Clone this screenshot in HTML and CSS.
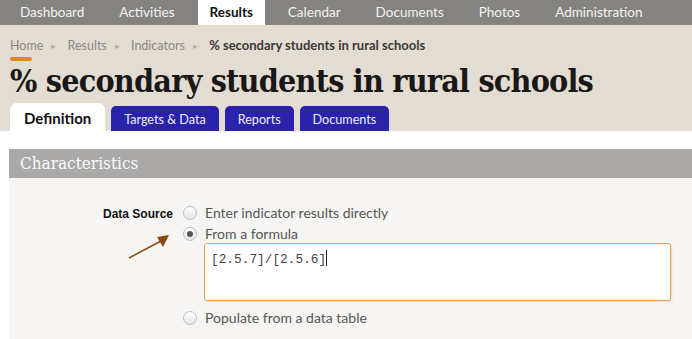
FILE: index.html
```html
<!DOCTYPE html>
<html lang="en">
<head>
    <meta charset="UTF-8">
    <title>% secondary students in rural schools</title>
    <link rel="stylesheet" href="styles.css">
</head>
<body>
    <div class="topnav">
        <a href="#" class="nav-item">Dashboard</a>
        <a href="#" class="nav-item">Activities</a>
        <a href="#" class="nav-item active">Results</a>
        <a href="#" class="nav-item">Calendar</a>
        <a href="#" class="nav-item">Documents</a>
        <a href="#" class="nav-item">Photos</a>
        <a href="#" class="nav-item">Administration</a>
    </div>

    <div class="header">
        <div class="crumbs">
            <a href="#">Home</a><span class="sep">&#9656;</span>
            <a href="#">Results</a><span class="sep">&#9656;</span>
            <a href="#">Indicators</a><span class="sep">&#9656;</span>
            <b>% secondary students in rural schools</b>
        </div>
        <div class="accent"></div>
        <h1>% secondary students in rural schools</h1>
        <div class="tabs">
            <a href="#" class="tab current">Definition</a>
            <a href="#" class="tab">Targets &amp; Data</a>
            <a href="#" class="tab">Reports</a>
            <a href="#" class="tab">Documents</a>
        </div>
    </div>

    <div class="section">
        <h2>Characteristics</h2>
        <div class="section-body">
            <div class="field">
                <label class="field-label">Data Source</label>
                <div class="options">
                    <label class="opt"><span class="radio"></span>Enter indicator results directly</label>
                    <label class="opt"><span class="radio checked"></span>From a formula</label>
                    <div class="formula">[2.5.7]/[2.5.6]<span class="caret"></span></div>
                    <label class="opt last"><span class="radio"></span>Populate from a data table</label>
                </div>
                <!-- annotation arrow -->
                <svg class="pointer" width="46" height="28" viewBox="0 0 46 28">
                    <line x1="2" y1="26" x2="34" y2="9" stroke="#8a4b12" stroke-width="1.5"/>
                    <polygon points="42,3 30,5 36,15" fill="#8a4b12"/>
                </svg>
            </div>
        </div>
    </div>
</body>
</html>
```

FILE: styles.css
```css
body {
    margin: 0;
    background-color: #fff;
    font-family: Lato, "Open Sans", sans-serif;
}

a {
    text-decoration: none;
    color: inherit;
}

.topnav {
    display: flex;
    height: 25px;
    padding-left: 8px;
    background-color: #858380;
}

.nav-item {
    padding: 0 12px;
    margin-right: 11px;
    line-height: 25px;
    font-size: 13.5px;
    color: #f4f2ef;
}

.nav-item.active {
    background-color: #fff;
    color: #111;
    font-weight: bold;
}

.header {
    background-color: #e3dcd3;
    padding: 12px 0 0 10px;
}

.crumbs {
    font-size: 12.5px;
    color: #8a8886;
}

.crumbs .sep {
    font-size: 9px;
    color: #b5b0aa;
    margin: 0 8px;
    position: relative;
    top: -1px;
}

.crumbs b {
    font-size: 13px;
    color: #3a3836;
}

.accent {
    width: 22px;
    height: 4px;
    margin-top: 4px;
    border-radius: 2px;
    background-color: #d9891e;
}

h1 {
    margin: 0;
    font-family: "DejaVu Serif", serif;
    font-stretch: condensed;
    font-weight: bold;
    font-size: 32px;
    line-height: 40px;
    letter-spacing: -0.8px;
    color: #1a1816;
}

.tabs {
    display: flex;
    gap: 6px;
    margin-top: 2px;
}

.tab {
    height: 25px;
    padding: 0 13px;
    line-height: 27px;
    font-size: 12.6px;
    color: #eeeefa;
    background-color: #2a22ab;
    border-radius: 5px 5px 0 0;
    margin-top: 3px;
}

.tab.current {
    height: 28px;
    margin-top: 0;
    padding: 0 14px;
    line-height: 31px;
    font-size: 15px;
    font-weight: bold;
    color: #111;
    background-color: #fff;
    border-radius: 7px 7px 0 0;
}

.section {
    margin: 18px 0 0 9px;
}

h2 {
    margin: 0;
    height: 29px;
    padding-left: 11px;
    line-height: 29px;
    font-family: "DejaVu Serif", serif;
    font-stretch: condensed;
    font-weight: normal;
    font-size: 17px;
    color: #fafafa;
    background-color: #aaa9a7;
}

.section-body {
    background-color: #f6f5f3;
    height: 170px;
}

.field {
    display: flex;
    position: relative;
    padding-top: 24px;
}

.field-label {
    width: 164px;
    text-align: right;
    font-family: "Liberation Sans", sans-serif;
    font-size: 12px;
    font-weight: bold;
    color: #111;
    padding-top: 5px;
}

.options {
    margin-left: 10px;
    display: flex;
    flex-direction: column;
}

.opt {
    display: flex;
    align-items: center;
    height: 21px;
    font-size: 14px;
    color: #555;
}

.opt.last {
    margin-top: 6px;
}

.radio {
    width: 12px;
    height: 12px;
    border-radius: 50%;
    border: 1px solid #bdbdbd;
    background: linear-gradient(#fff, #e6e6e6);
    margin-right: 8px;
    position: relative;
}

.radio.checked::after {
    content: "";
    position: absolute;
    left: 3px;
    top: 3px;
    width: 6px;
    height: 6px;
    border-radius: 50%;
    background-color: #555;
}

.formula {
    margin: -1px 0 0 21px;
    width: 453px;
    height: 44px;
    padding: 6px 6px;
    border: 1px solid #e8a34d;
    border-radius: 3px;
    background-color: #fff;
    box-shadow: 1px 1px 2px rgba(0, 0, 0, 0.1);
    font-family: "Liberation Mono", monospace;
    font-size: 12.8px;
    line-height: 17px;
    color: #444;
}

.caret {
    display: inline-block;
    width: 1px;
    height: 16px;
    background-color: #222;
    vertical-align: -3px;
}

.pointer {
    position: absolute;
    left: 118px;
    top: 54px;
}
```
